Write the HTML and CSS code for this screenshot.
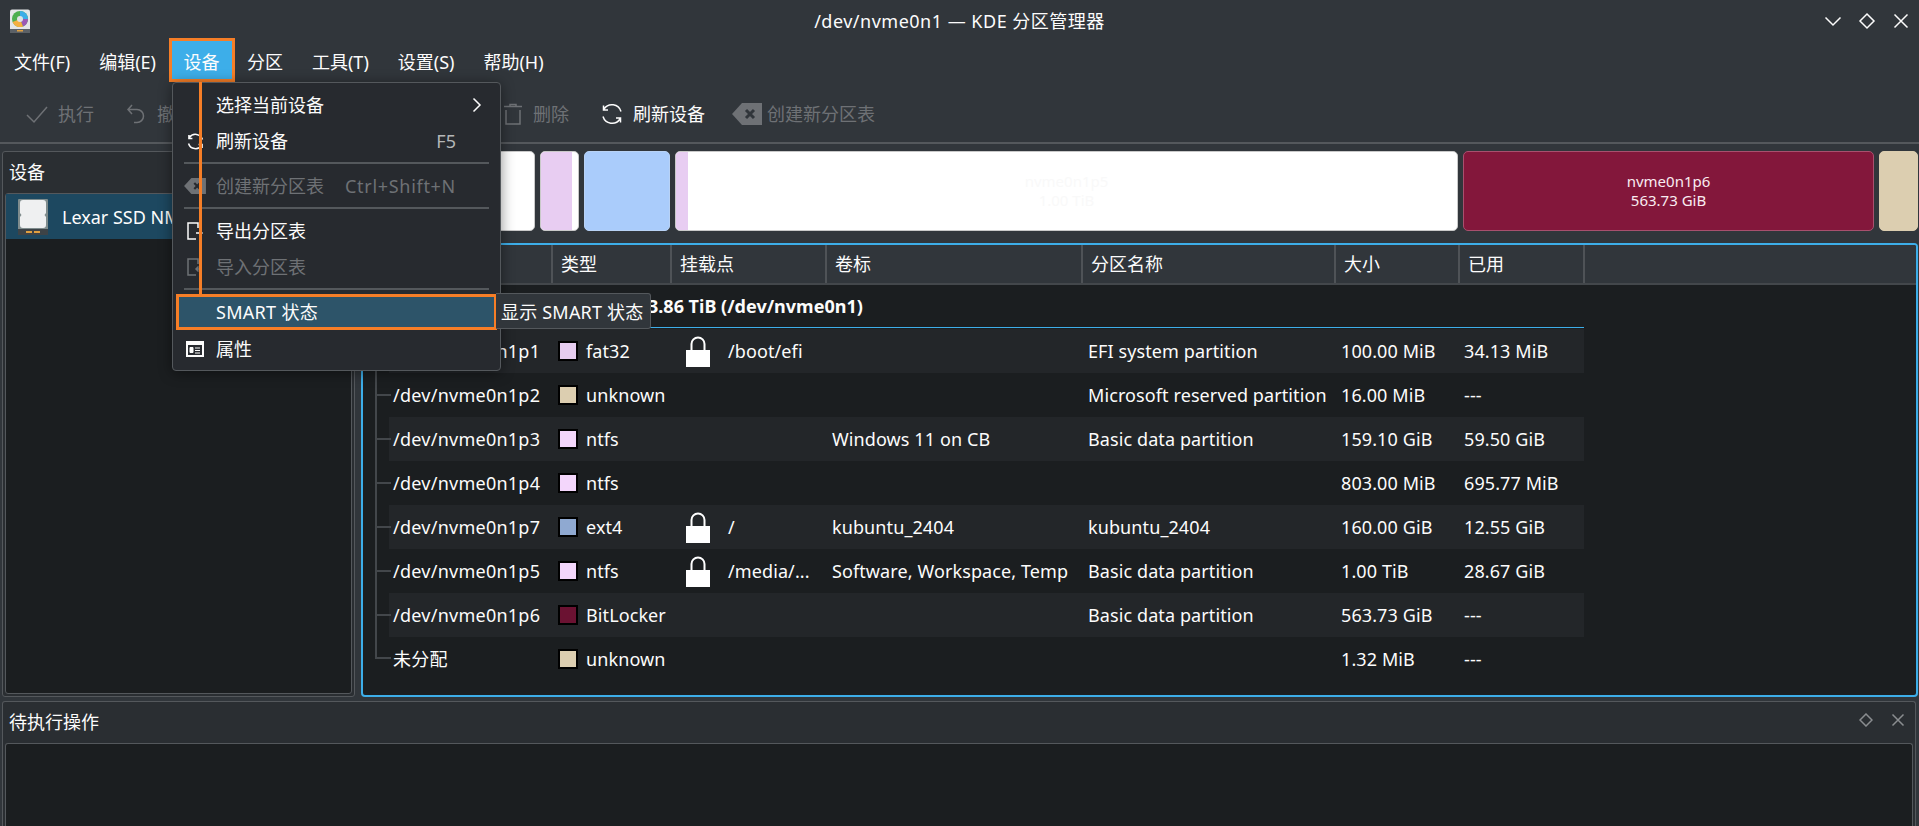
FILE: index.html
```html
<!DOCTYPE html>
<html>
<head>
  <meta charset="UTF-8">
  <link rel="stylesheet" href="styles.css">
</head>
<body>
  <header class="titlebar">
    <svg class="app-logo" width="24" height="24" viewBox="0 0 24 24">
      <rect x="1" y="0.5" width="20" height="23" rx="2" fill="#e4e6e8"/>
      <rect x="1" y="20" width="20" height="4" fill="#5c6166"/>
      <rect x="8" y="21" width="6" height="1.5" fill="#e0a040"/>
      <circle cx="11" cy="10" r="8" fill="#4caf50"/>
      <path d="M11 10V2a8 8 0 0 1 8 8z" fill="#3daee9"/>
      <path d="M11 10h8a8 8 0 0 1-5 7.4z" fill="#9b59b6"/>
      <path d="M11 10l3 7.4A8 8 0 0 1 3.5 13z" fill="#f5b041"/>
      <circle cx="11" cy="10" r="3" fill="#dfe3e6"/>
    </svg>
    <div class="window-title">/dev/nvme0n1 — KDE 分区管理器</div>
    <div class="window-buttons">
      <svg width="18" height="18" viewBox="0 0 18 18"><path d="M1.5 5.5L9 13l7.5-7.5" class="line"/></svg>
      <svg width="18" height="18" viewBox="0 0 18 18"><path d="M9 2l7 7-7 7-7-7z" class="line"/></svg>
      <svg width="18" height="18" viewBox="0 0 18 18"><path d="M2.5 2.5l13 13M15.5 2.5l-13 13" class="line"/></svg>
    </div>
  </header>

  <nav class="menubar">
    <span class="menu-item">文件(F)</span>
    <span class="menu-item">编辑(E)</span>
    <span class="menu-item active">设备</span>
    <span class="menu-item">分区</span>
    <span class="menu-item">工具(T)</span>
    <span class="menu-item">设置(S)</span>
    <span class="menu-item">帮助(H)</span>
  </nav>

  <div class="toolbar">
    <div class="tool disabled">
      <svg width="22" height="22" viewBox="0 0 22 22"><path d="M1 12l7 7L21 4" class="line"/></svg>
      <span>执行</span>
    </div>
    <div class="tool disabled tool-undo">
      <svg width="22" height="22" viewBox="0 0 22 22"><path d="M7 2L3 6.5l4 4.5M3 6.5h9a6.5 6.5 0 0 1 0 13H9" class="line"/></svg>
      <span>撤销</span>
    </div>
    <div class="tool disabled tool-delete">
      <svg width="20" height="22" viewBox="0 0 20 22"><path d="M1 3.5h18M7 3.5V1.500h6v2M3 7v14h14V7" class="line"/></svg>
      <span>删除</span>
    </div>
    <div class="tool tool-refresh">
      <svg width="22" height="22" viewBox="0 0 22 22"><path d="M20 8.500A9.500 9.500 0 0 0 3 6M2.500 2.500V7H7M2 13.500A9.500 9.500 0 0 0 19 16M19.500 19.500V15H15" class="line"/></svg>
      <span>刷新设备</span>
    </div>
    <div class="tool disabled tool-table">
      <svg width="30" height="22" viewBox="0 0 30 22"><path d="M10 0h20v22H10L0 11z" fill="#6e7175"/><path d="M14 7l8 8M22 7l-8 8" stroke="#31363b" stroke-width="3" fill="none"/></svg>
      <span>创建新分区表</span>
    </div>
  </div>

  <main class="workspace">
    <section class="device-panel">
      <div class="panel-title">设备</div>
      <div class="device-list">
        <div class="device-row">
          <svg width="30" height="36" viewBox="0 0 30 36">
            <rect x="0" y="0" width="30" height="36" rx="1" fill="#7f8c8d"/>
            <rect x="0" y="30" width="30" height="6" fill="#3d4347"/>
            <rect x="8" y="32" width="6" height="2" fill="#e0a040"/>
            <rect x="16" y="32" width="6" height="2" fill="#e0a040"/>
            <path d="M5 1h20a3 3 0 0 1 3 3v10l-1.500 2 1.500 2v8a3 3 0 0 1-3 3H5a3 3 0 0 1-3-3v-8l1.500-2L2 14V4a3 3 0 0 1 3-3z" fill="#eff0f1"/>
          </svg>
          <span>Lexar SSD NM790 4TB</span>
        </div>
      </div>
    </section>

    <section class="disk-area">
      <div class="partition-bar">
        <div class="part part-p1"></div>
        <div class="part part-p2"><div class="used used-p2"></div></div>
        <div class="part part-p7"></div>
        <div class="part part-p5"><div class="used used-p5"></div><div class="part-label faint">nvme0n1p5<br>1.00 TiB</div></div>
        <div class="part part-p6"><div class="part-label">nvme0n1p6<br>563.73 GiB</div></div>
        <div class="part part-free"></div>
      </div>

      <div class="tree-panel">
        <div class="tree-head row">
          <div>名称</div><div>类型</div><div>挂载点</div><div>卷标</div><div>分区名称</div><div>大小</div><div>已用</div>
        </div>
        <div class="disk-row">Lexar SSD NM790 4TB - 3.86 TiB (/dev/nvme0n1)</div>
        <div class="tree-body">
          <div class="row item alt">
            <div>/dev/nvme0n1p1</div><div class="type"><i class="swatch fat32"></i>fat32</div>
            <div class="mount"><svg class="lock" width="24" height="32" viewBox="0 0 24 32"><path d="M5.500 16V9a6.500 6.500 0 0 1 13 0v7" fill="none" stroke="#fff" stroke-width="2"/><rect y="15" width="24" height="17" fill="#fff"/></svg>/boot/efi</div>
            <div></div><div>EFI system partition</div><div>100.00 MiB</div><div>34.13 MiB</div>
          </div>
          <div class="row item">
            <div>/dev/nvme0n1p2</div><div class="type"><i class="swatch unknown"></i>unknown</div>
            <div></div><div></div><div>Microsoft reserved partition</div><div>16.00 MiB</div><div>---</div>
          </div>
          <div class="row item alt">
            <div>/dev/nvme0n1p3</div><div class="type"><i class="swatch ntfs"></i>ntfs</div>
            <div></div><div>Windows 11 on CB</div><div>Basic data partition</div><div>159.10 GiB</div><div>59.50 GiB</div>
          </div>
          <div class="row item">
            <div>/dev/nvme0n1p4</div><div class="type"><i class="swatch ntfs"></i>ntfs</div>
            <div></div><div></div><div></div><div>803.00 MiB</div><div>695.77 MiB</div>
          </div>
          <div class="row item alt">
            <div>/dev/nvme0n1p7</div><div class="type"><i class="swatch ext4"></i>ext4</div>
            <div class="mount"><svg class="lock" width="24" height="32" viewBox="0 0 24 32"><path d="M5.500 16V9a6.500 6.500 0 0 1 13 0v7" fill="none" stroke="#fff" stroke-width="2"/><rect y="15" width="24" height="17" fill="#fff"/></svg>/</div>
            <div>kubuntu_2404</div><div>kubuntu_2404</div><div>160.00 GiB</div><div>12.55 GiB</div>
          </div>
          <div class="row item">
            <div>/dev/nvme0n1p5</div><div class="type"><i class="swatch ntfs"></i>ntfs</div>
            <div class="mount"><svg class="lock" width="24" height="32" viewBox="0 0 24 32"><path d="M5.500 16V9a6.500 6.500 0 0 1 13 0v7" fill="none" stroke="#fff" stroke-width="2"/><rect y="15" width="24" height="17" fill="#fff"/></svg>/media/...</div>
            <div>Software, Workspace, Temp</div><div>Basic data partition</div><div>1.00 TiB</div><div>28.67 GiB</div>
          </div>
          <div class="row item alt">
            <div>/dev/nvme0n1p6</div><div class="type"><i class="swatch bitlocker"></i>BitLocker</div>
            <div></div><div></div><div>Basic data partition</div><div>563.73 GiB</div><div>---</div>
          </div>
          <div class="row item last">
            <div>未分配</div><div class="type"><i class="swatch unknown"></i>unknown</div>
            <div></div><div></div><div></div><div>1.32 MiB</div><div>---</div>
          </div>
        </div>
      </div>
    </section>
  </main>

  <section class="pending-panel">
    <div class="pending-title">
      <span>待执行操作</span>
      <div class="dock-buttons">
        <svg width="14" height="14" viewBox="0 0 14 14"><path d="M7 1l6 6-6 6-6-6z" class="line"/></svg>
        <svg width="14" height="14" viewBox="0 0 14 14"><path d="M1.500 1.500l11 11M12.500 1.500l-11 11" class="line"/></svg>
      </div>
    </div>
    <div class="pending-list"></div>
  </section>

  <!-- open menu, lies over the window -->
  <div class="popup-menu">
    <div class="popup-item"><span class="popup-icon"></span><span class="popup-text">选择当前设备</span>
      <svg class="submenu-arrow" width="10" height="16" viewBox="0 0 10 16"><path d="M1.500 1.500L8 8l-6.500 6.500" class="line"/></svg>
    </div>
    <div class="popup-item"><span class="popup-icon">
      <svg width="17" height="17" viewBox="0 0 22 22"><path d="M20 8.500A9.500 9.500 0 0 0 3 6M2.500 2.500V7H7M2 13.500A9.500 9.500 0 0 0 19 16M19.500 19.500V15H15" class="line wide"/></svg>
    </span><span class="popup-text">刷新设备</span><span class="shortcut">F5</span></div>
    <div class="popup-sep"></div>
    <div class="popup-item disabled"><span class="popup-icon">
      <svg width="22" height="16" viewBox="0 0 30 22"><path d="M10 0h20v22H10L0 11z" fill="#6e7175"/><path d="M14 7l8 8M22 7l-8 8" stroke="#272a2f" stroke-width="3" fill="none"/></svg>
    </span><span class="popup-text">创建新分区表</span><span class="shortcut keys">Ctrl+Shift+N</span></div>
    <div class="popup-sep"></div>
    <div class="popup-item"><span class="popup-icon">
      <svg width="16" height="18" viewBox="0 0 16 18"><path d="M11 6V1H1v16h8M9 11h6M12.500 8.500L15 11l-2.500 2.500" class="line"/></svg>
    </span><span class="popup-text">导出分区表</span></div>
    <div class="popup-item disabled"><span class="popup-icon">
      <svg width="16" height="18" viewBox="0 0 16 18"><path d="M11 6V1H1v16h8M15 11H9M11.500 8.500L9 11l2.500 2.500" class="line"/></svg>
    </span><span class="popup-text">导入分区表</span></div>
    <div class="popup-sep"></div>
    <div class="popup-item selected"><span class="popup-icon"></span><span class="popup-text latin">SMART 状态</span></div>
    <div class="popup-item"><span class="popup-icon">
      <svg width="18" height="16" viewBox="0 0 18 16"><rect x="1" y="1" width="16" height="14" fill="none" stroke="#fcfcfc" stroke-width="2"/><path d="M1 1h16v3H1z" fill="#fcfcfc"/><path d="M4 6.500h3v5H4zM9 7h5M9 9.500h5M9 12h5" fill="#fcfcfc" stroke="#fcfcfc"/></svg>
    </span><span class="popup-text">属性</span></div>
  </div>
  <div class="tooltip">显示 SMART 状态</div>
  <div class="marker-line"></div>
</body>
</html>
```

FILE: styles.css
```css
* {
  box-sizing: border-box;
}
html, body {
  margin: 0;
  padding: 0;
}
body {
  position: relative;
  width: 1919px;
  height: 826px;
  overflow: hidden;
  background: #31363b;
  color: #fcfcfc;
  font-family: "Noto Sans", "Noto Sans CJK SC", sans-serif;
  font-size: 18px;
  line-height: 24px;
}
.line {
  fill: none;
  stroke: currentColor;
  stroke-width: 1.5;
}
.line.wide {
  stroke-width: 2;
}

/* title bar */
.titlebar {
  display: grid;
  grid-template-columns: 1fr auto 1fr;
  align-items: center;
  height: 41px;
}
.app-logo {
  margin-left: 9px;
}
.window-title {
  letter-spacing: 0.5px;
}
.window-buttons {
  display: flex;
  justify-content: flex-end;
  gap: 16px;
  padding-right: 9px;
}

/* menu bar */
.menubar {
  display: flex;
  height: 38px;
}
.menu-item {
  display: flex;
  align-items: center;
  padding: 3px 14px 0;
  margin-right: 1px;
}
.menu-item.active {
  margin: 0 1px;
  padding: 3px 12.5px 0 11.5px;
  background: #3daee9;
  outline: 3px solid #f67e27;
}

/* toolbar */
.toolbar {
  display: flex;
  align-items: center;
  height: 65px;
  padding: 7px 0 0 26px;
  border-bottom: 2px solid #54585c;
}
.tool {
  display: flex;
  align-items: center;
  gap: 10px;
}
.tool.disabled {
  color: #6e7175;
}
.tool-undo {
  margin-left: 31px;
}
.tool-delete {
  margin-left: 310px;
}
.tool-refresh {
  margin-left: 32px;
}
.tool-table {
  margin-left: 27px;
  gap: 5px;
}

/* main area */
.workspace {
  display: flex;
  gap: 6px;
  height: 557px;
  padding: 7px 1px 4px 2px;
}
.device-panel {
  display: flex;
  flex-direction: column;
  width: 353px;
  background: #2a2e32;
  border: 1px solid #54585c;
  border-radius: 3px;
  padding: 0 2px 2px;
}
.panel-title {
  height: 41px;
  padding: 8px 4px 0;
}
.device-list {
  flex: 1;
  background: #1b1e20;
  border: 1px solid #54585c;
  border-radius: 3px;
}
.device-row {
  display: flex;
  align-items: center;
  gap: 14px;
  height: 45px;
  padding-left: 12px;
  background: #1d4860;
  white-space: nowrap;
}

.disk-area {
  display: flex;
  flex-direction: column;
  gap: 12px;
  width: 1557px;
}
.partition-bar {
  display: flex;
  gap: 5px;
  height: 80px;
}
.part {
  position: relative;
  display: flex;
  overflow: hidden;
  background: #fff;
  border: 1px solid #c9c9c9;
  border-radius: 5px;
}
.part-p1 { width: 174px; }
.part-p2 { width: 39px; }
.part-p7 { width: 86px; background: #aaccfb; border-color: #b8d2f5; }
.part-p5 { width: 783px; }
.part-p6 { width: 411px; background: #83173b; border-color: #a8506e; }
.part-free { width: 39px; background: #dcceb0; border-color: #dcceb0; }
.used {
  height: 100%;
  background: #e8cdf2;
}
.used-p2 { width: 31px; }
.used-p5 { width: 12px; }
.part-label {
  flex: 1;
  align-self: center;
  text-align: center;
  font-size: 15px;
  line-height: 19px;
  color: #f9ecf1;
}
.part-label.faint {
  margin-left: -12px;
  color: #f9f9f9;
}

/* partition tree */
.tree-panel {
  flex: 1;
  background: #1b1e20;
  border: 2px solid #3daee9;
  border-radius: 4px;
  overflow: hidden;
}
.row {
  display: grid;
  grid-template-columns: 190px 119px 155px 256px 253px 124px 125px;
  width: 1222px;
}
.tree-head {
  height: 40px;
  width: 100%;
  background: #31363b;
  border-bottom: 2px solid #43474b;
}
.tree-head > div {
  display: flex;
  align-items: center;
  padding-left: 8px;
  border-right: 2px solid #4f5357;
}
.disk-row {
  height: 43px;
  margin: 0 332px 1px 0;
  padding: 9px 0 0 78px;
  font-weight: 700;
  border-bottom: 1px solid #3daee9;
  white-space: nowrap;
}
.tree-body {
  padding-left: 26px;
}
.item {
  position: relative;
  width: 1195px;
  grid-template-columns: 163px 119px 155px 256px 253px 123px 126px;
  height: 44px;
  align-items: center;
  white-space: nowrap;
  letter-spacing: 0.1px;
}
.item > div {
  padding-left: 4px;
}
.item > div:first-child {
  letter-spacing: 0.25px;
}
.item > div:nth-child(n+4) {
  padding-left: 6px;
}
.item.alt {
  background: #232629;
}
/* tree branch lines */
.item::before {
  content: "";
  position: absolute;
  left: -14px;
  top: 0;
  width: 14px;
  height: 100%;
  border-left: 2px solid #43474b;
  background: linear-gradient(#43474b, #43474b) no-repeat 0 50% / 100% 2px;
}
.item.last::before {
  height: 50%;
  background: linear-gradient(#43474b, #43474b) no-repeat 0 100% / 100% 2px;
}
.type {
  display: flex;
  align-items: center;
  gap: 8px;
  padding-left: 6px !important;
}
.swatch {
  width: 20px;
  height: 20px;
  border: 2px solid #000;
}
.swatch.fat32 { background: #e6ccef; }
.swatch.unknown { background: #dcceb0; }
.swatch.ntfs { background: #f3d6fb; }
.swatch.ext4 { background: #8fa9d1; }
.swatch.bitlocker { background: #6b1232; }
.mount {
  display: flex;
  align-items: center;
  gap: 18px;
  padding-left: 15px !important;
}

/* bottom dock */
.pending-panel {
  height: 125px;
  margin: 0 3px 0 2px;
  background: #2a2e32;
  border: 1px solid #54585c;
  border-bottom: 0;
  border-radius: 3px 3px 0 0;
  padding: 0 2px;
}
.pending-title {
  display: flex;
  align-items: center;
  justify-content: space-between;
  height: 41px;
  padding: 0 3px 2px 4px;
}
.dock-buttons {
  display: flex;
  gap: 18px;
  padding: 0 5px 4px 0;
  color: #8a8d90;
}
.pending-list {
  height: 83px;
  background: #1b1e20;
  border: 1px solid #54585c;
  border-bottom: 0;
  border-radius: 3px 3px 0 0;
}

/* popup menu */
.popup-menu {
  position: absolute;
  left: 172px;
  top: 82px;
  width: 329px;
  height: 289px;
  padding-top: 4px;
  background: #272a2f;
  border: 1px solid #54585c;
  border-radius: 4px;
  box-shadow: 0 2px 14px rgba(0, 0, 0, 0.45);
}
.popup-item {
  display: flex;
  align-items: center;
  height: 36px;
  margin: 0 3px;
  padding-right: 41px;
  white-space: nowrap;
}
.popup-item.disabled {
  color: #6e7175;
}
.popup-icon {
  display: flex;
  justify-content: center;
  width: 38px;
}
.popup-text {
  margin-left: 2px;
  flex: 1;
}
.popup-text.latin {
  letter-spacing: 0.3px;
}
.shortcut {
  color: #b4b6b8;
}
.shortcut.keys {
  letter-spacing: 0.7px;
}
.disabled .shortcut {
  color: #6e7175;
}
.submenu-arrow {
  margin-right: -26px;
}
.popup-sep {
  height: 2px;
  margin: 3px 11px 4px;
  background: #54585c;
}
.popup-item.selected {
  margin-bottom: 1px;
  background: #2d5469;
  outline: 3px solid #f67e27;
  outline-offset: -3px;
}
.tooltip {
  position: absolute;
  left: 496px;
  top: 293px;
  width: 155px;
  height: 36px;
  padding: 6px 0 0 5px;
  background: #31363b;
  border: 1px solid #54585c;
  border-left: 0;
  border-radius: 0 3px 3px 0;
  letter-spacing: 0.2px;
  white-space: nowrap;
}
.marker-line {
  position: absolute;
  left: 199px;
  top: 82px;
  width: 3px;
  height: 212px;
  background: #f67e27;
}
```
